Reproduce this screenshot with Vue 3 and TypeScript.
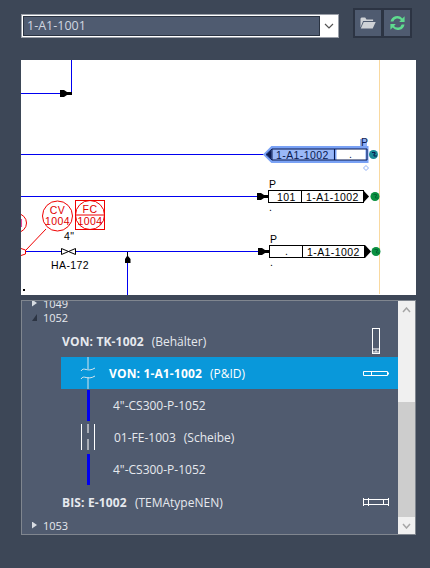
<script setup lang="ts">
const selected = '1-A1-1001'
</script>

<template>
  <div class="page">
    <div class="toolbar">
      <div class="combo">
        <div class="combo-field">{{ selected }}</div>
        <div class="combo-arrow">
          <svg width="10" height="6" viewBox="0 0 10 6"><path d="M1 1l4 4 4-4" fill="none" stroke="#555" stroke-width="1.2" /></svg>
        </div>
      </div>
      <div class="btn-group">
        <button class="tool-btn">
          <svg width="16" height="14" viewBox="0 0 16 14">
            <path d="M0.5 2.5v9l2.6-6.5h10V3.5H6.5L5.2 1.5H1.5z" fill="#cfd2d6" />
            <path d="M3.7 6h12l-3 6.6H0.8z" fill="#cfd2d6" />
          </svg>
        </button>
        <button class="tool-btn">
          <svg width="17" height="16" viewBox="0 0 17 16">
            <path d="M1.500 6.600A6.800 6.800 0 0 1 13.400 3.400L15.600 1.300V7H10.200l1.800-1.900A4.400 4.400 0 0 0 4.300 6.600z" fill="#5fdc8f" />
            <path d="M15.500 9.400A6.800 6.800 0 0 1 3.600 12.600L1.400 14.700V9H6.800L5 10.900A4.400 4.400 0 0 0 12.700 9.400z" fill="#5fdc8f" />
          </svg>
        </button>
      </div>
    </div>

    <div class="drawing">
      <svg width="395" height="235" viewBox="21 60 395 235" class="drawing-svg">
        <line x1="379.5" y1="60" x2="379.5" y2="294" stroke="#f9d9a0" />
        <g stroke="#0000f0" fill="none" stroke-width="1">
          <path d="M71.5 60V93.5H21" />
          <path d="M21 154.500H266" />
          <path d="M21 196.500H258" />
          <path d="M26 251.500H269" />
          <path d="M127.500 252V295" />
        </g>
        <g fill="#000">
          <path d="M60 90h4l3 2h5v3h-5l-3 2h-4z" />
          <path d="M257 193h4l3 2h5v3h-5l-3 2h-4z" />
          <path d="M258 248h4l3 2h5v3h-5l-3 2h-4z" />
          <path d="M125 263v-4l2-3v-4h1v4l2.500 3v4z" />
        </g>

        <!-- instruments -->
        <g fill="none" stroke="#f00000">
          <circle cx="57.500" cy="216" r="15" />
          <circle cx="90" cy="215" r="14.500" />
          <rect x="75.500" y="200.500" width="29" height="29" />
          <path d="M75 215h30" />
          <circle cx="17" cy="223" r="9.500" />
          <path d="M46 229L26 250" />
          <path d="M21 248.500l4.500 1.500v4l-4.500 1.500" />
        </g>
        <g class="cad" fill="#e00000" text-anchor="middle">
          <text x="57.500" y="214">CV</text>
          <text x="57.500" y="225">1004</text>
          <text x="90" y="213">FC</text>
          <text x="90" y="225">1004</text>
          <text x="19" y="227">H</text>
        </g>

        <path d="M61.500 248.500l14 6v-6l-14 6z" fill="#fff" stroke="#000" />
        <g class="cad" fill="#000">
          <text x="64" y="240">4"</text>
          <text x="51" y="269">HA-172</text>
        </g>
        <rect x="23" y="289" width="2" height="2" fill="#000" />

        <!-- selected connector -->
        <path d="M266 154.500l6-6h62v12h-62z" fill="#9ab8f7" />
        <g fill="none" stroke="#7aa2f5" stroke-width="3">
          <path d="M265 154.500l7-7h95v14h-95z" />
          <path d="M335 149v11" />
        </g>
        <rect x="360" y="139" width="7" height="7" fill="#8fb0f6" />
        <path d="M366 165.500l2.500 2.500-2.500 2.500-2.500-2.500z" fill="none" stroke="#8fb0f6" />
        <path d="M266 154.500l6-5.500h95v11h-95zM272 149v11M334.500 149v11" fill="none" stroke="#0a1a50" />
        <path d="M266.500 154.500l5-4.500v9z" fill="#0a1a50" />
        <circle cx="373.500" cy="154.500" r="4.500" fill="#1b8a96" />
        <path d="M372 152.500h3v1.500h-1v2h3" fill="none" stroke="#0a1a50" />
        <g class="cad" fill="#0a1a50">
          <text x="276" y="158.500">1-A1-1002</text>
          <text x="361" y="146">P</text>
          <text x="349" y="158">.</text>
        </g>

        <!-- off page connectors -->
        <g fill="#fff" stroke="#000">
          <rect x="268.500" y="190.500" width="95" height="12" />
          <path d="M301.500 190v13" />
          <rect x="269.500" y="245.500" width="95" height="12" />
          <path d="M302.500 245v13" />
        </g>
        <path d="M363 190l6 6.500-6 6.500z" fill="#000" />
        <path d="M365 245l6 6.500-6 6.500z" fill="#000" />
        <circle cx="375" cy="196.500" r="4.500" fill="#0a9040" />
        <circle cx="376" cy="251.500" r="4.500" fill="#0a9040" />
        <path d="M373.500 194.500h3v1.500h-1v2h3M374.500 249.500h3v1.500h-1v2h3" fill="none" stroke="#063" />
        <g class="cad" fill="#000">
          <text x="269" y="188">P</text>
          <text x="277" y="200.500">101</text>
          <text x="306" y="200.500">1-A1-1002</text>
          <text x="269" y="211">.</text>
          <text x="270" y="243">P</text>
          <text x="285" y="255">.</text>
          <text x="307" y="255.500">1-A1-1002</text>
          <text x="270" y="266">.</text>
        </g>
      </svg>
    </div>

    <div class="tree">
      <div class="tree-body">
        <div class="tree-items">
          <div class="node">
            <span class="caret caret-right" />
            <span>1049</span>
          </div>
          <div class="node node-open">
            <span class="caret caret-open" />
            <span>1052</span>
          </div>

          <div class="item item-head">
            <span class="label"><b>VON: TK-1002</b><i>(Behälter)</i></span>
            <svg class="end-icon icon-tank" width="8" height="26" viewBox="0 0 8 26">
              <rect x="0.500" y="0.500" width="7" height="25" fill="none" stroke="#fff" />
              <path d="M1 21h6M1 24h6M3 23h2" stroke="#fff" />
            </svg>
          </div>

          <div class="item item-selected">
            <svg class="line-icon" width="16" height="32" viewBox="0 0 16 32">
              <path d="M8 0v12M8 20v12" stroke="#d8e6ee" />
              <path d="M1 14c3-5 6 2 14-3M1 22c3-5 6 2 14-3" fill="none" stroke="#d8e6ee" />
            </svg>
            <span class="label label-pipe"><b>VON: 1-A1-1002</b><i>(P&amp;ID)</i></span>
            <svg class="end-icon" width="26" height="5" viewBox="0 0 26 5">
              <path d="M0.500 0.500h24v4h-24zM8.500 0.500v4" fill="none" stroke="#fff" />
              <rect x="24" y="1.500" width="2" height="2" fill="#fff" />
            </svg>
          </div>

          <div class="item item-pipe">
            <div class="bar" />
            <span class="label label-sub">4"-CS300-P-1052</span>
          </div>
          <div class="item item-pipe">
            <svg class="line-icon" width="16" height="26" viewBox="0 0 16 26">
              <path d="M1.500 0v26M14.500 0v26" stroke="#fff" />
              <path d="M8 0v9M8 15v11" stroke="#fff" />
            </svg>
            <span class="label label-sub">01-FE-1003<i>(Scheibe)</i></span>
          </div>
          <div class="item item-pipe">
            <div class="bar" />
            <span class="label label-sub">4"-CS300-P-1052</span>
          </div>

          <div class="item item-head item-last">
            <span class="label"><b>BIS: E-1002</b><i>(TEMAtypeNEN)</i></span>
            <svg class="end-icon" width="26" height="8" viewBox="0 0 26 8">
              <path d="M0.500 0v8M25.500 0v8M20.500 1v6M0.500 1.500h25v5h-25zM5.500 0v8" fill="none" stroke="#fff" />
            </svg>
          </div>

          <div class="node">
            <span class="caret caret-right" />
            <span>1053</span>
          </div>
        </div>
      </div>

      <div class="scrollbar">
        <div class="scroll-btn">
          <svg width="9" height="6" viewBox="0 0 9 6"><path d="M1 5l3.500-4L8 5" fill="none" stroke="#a6a6a6" stroke-width="1.500" /></svg>
        </div>
        <div class="scroll-track" />
        <div class="scroll-thumb" />
        <div class="scroll-btn">
          <svg width="9" height="6" viewBox="0 0 9 6"><path d="M1 1l3.500 4L8 1" fill="none" stroke="#a6a6a6" stroke-width="1.500" /></svg>
        </div>
      </div>
    </div>
  </div>
</template>

<style>
body {
  background: #3d4757;
}
</style>

<style scoped>
.page {
  width: 430px;
  height: 568px;
  box-sizing: border-box;
  padding: 8px 14px 0 21px;
  background: #3d4757;
  font-family: "Open Sans", "Liberation Sans", sans-serif;
  font-size: 12px;
  color: #e6e9ee;
  overflow: hidden;
}
.toolbar {
  display: flex;
  align-items: flex-start;
  height: 30px;
}
.combo {
  display: flex;
  width: 318px;
  height: 24px;
  margin-top: 6px;
  box-sizing: border-box;
  border: 1px solid #9a9fa8;
  background: #fff;
  padding: 1px 0 1px 1px;
}
.combo-field {
  width: 297px;
  box-sizing: border-box;
  padding-left: 3px;
  background: #4f5b70;
  border: 1px solid #2a3342;
  line-height: 18px;
  font-size: 12.5px;
  color: #d0d7e0;
}
.combo-arrow {
  flex: 1;
  display: flex;
  align-items: center;
  justify-content: center;
}
.btn-group {
  display: flex;
  gap: 3px;
  margin-left: 14px;
  padding: 2px;
  background: #2c3443;
}
.tool-btn {
  width: 26px;
  height: 26px;
  border: none;
  padding: 0;
  background: #4f5b70;
  display: flex;
  align-items: center;
  justify-content: center;
}
.drawing {
  width: 395px;
  height: 235px;
  margin-top: 22px;
  background: #fff;
}
.drawing-svg {
  display: block;
}
.cad {
  font-family: "Liberation Sans", sans-serif;
  font-size: 10.5px;
  letter-spacing: 0.4px;
}
.tree {
  display: flex;
  width: 395px;
  height: 235px;
  margin-top: 5px;
  box-sizing: border-box;
  border: 1px solid #80868f;
  background: #505b6f;
}
.tree-body {
  flex: 1;
  min-width: 0;
  overflow: hidden;
}
.tree-items {
  margin-top: -5px;
}
.node {
  display: flex;
  align-items: center;
  height: 14px;
  padding-left: 10px;
  gap: 6px;
  font-size: 11px;
}
.node-open {
  height: 15px;
}
.caret {
  width: 5px;
  height: 7px;
  flex-shrink: 0;
}
.caret-right {
  background: #d8dce2;
  clip-path: polygon(0 0, 100% 50%, 0 100%);
}
.caret-open {
  background: #2c3443;
  clip-path: polygon(100% 0, 100% 100%, 0 100%);
}
.item {
  display: flex;
  align-items: center;
  height: 32px;
  margin-left: 39px;
}
.item-head {
  padding-left: 1px;
}
.item-last {
  margin-top: 1px;
}
.item-selected {
  background: #0998da;
  color: #fff;
}
.item-pipe {
  padding-left: 20px;
}
.bar {
  width: 3px;
  height: 31px;
  margin: 0 6px 0 6px;
  background: #0000f0;
}
.line-icon {
  flex-shrink: 0;
}
.item-selected .line-icon {
  margin-left: 19px;
}
.item-pipe .line-icon {
  margin-right: 1px;
  margin-left: -1px;
}
.label {
  white-space: nowrap;
}
.label b {
  font-weight: 700;
  letter-spacing: 0.15px;
}
.label i {
  font-style: normal;
  margin-left: 8px;
}
.label-pipe {
  margin-left: 13px;
}
.label-sub {
  margin-left: 17px;
}
.end-icon {
  margin-left: auto;
  margin-right: 9px;
}
.icon-tank {
  margin-right: 18px;
}
.scrollbar {
  width: 17px;
  flex-shrink: 0;
  display: flex;
  flex-direction: column;
  background: #f0f0f0;
}
.scroll-btn {
  height: 17px;
  display: flex;
  align-items: center;
  justify-content: center;
}
.scroll-track {
  height: 84px;
}
.scroll-thumb {
  flex: 1;
  background: #cdcdcd;
}
</style>
